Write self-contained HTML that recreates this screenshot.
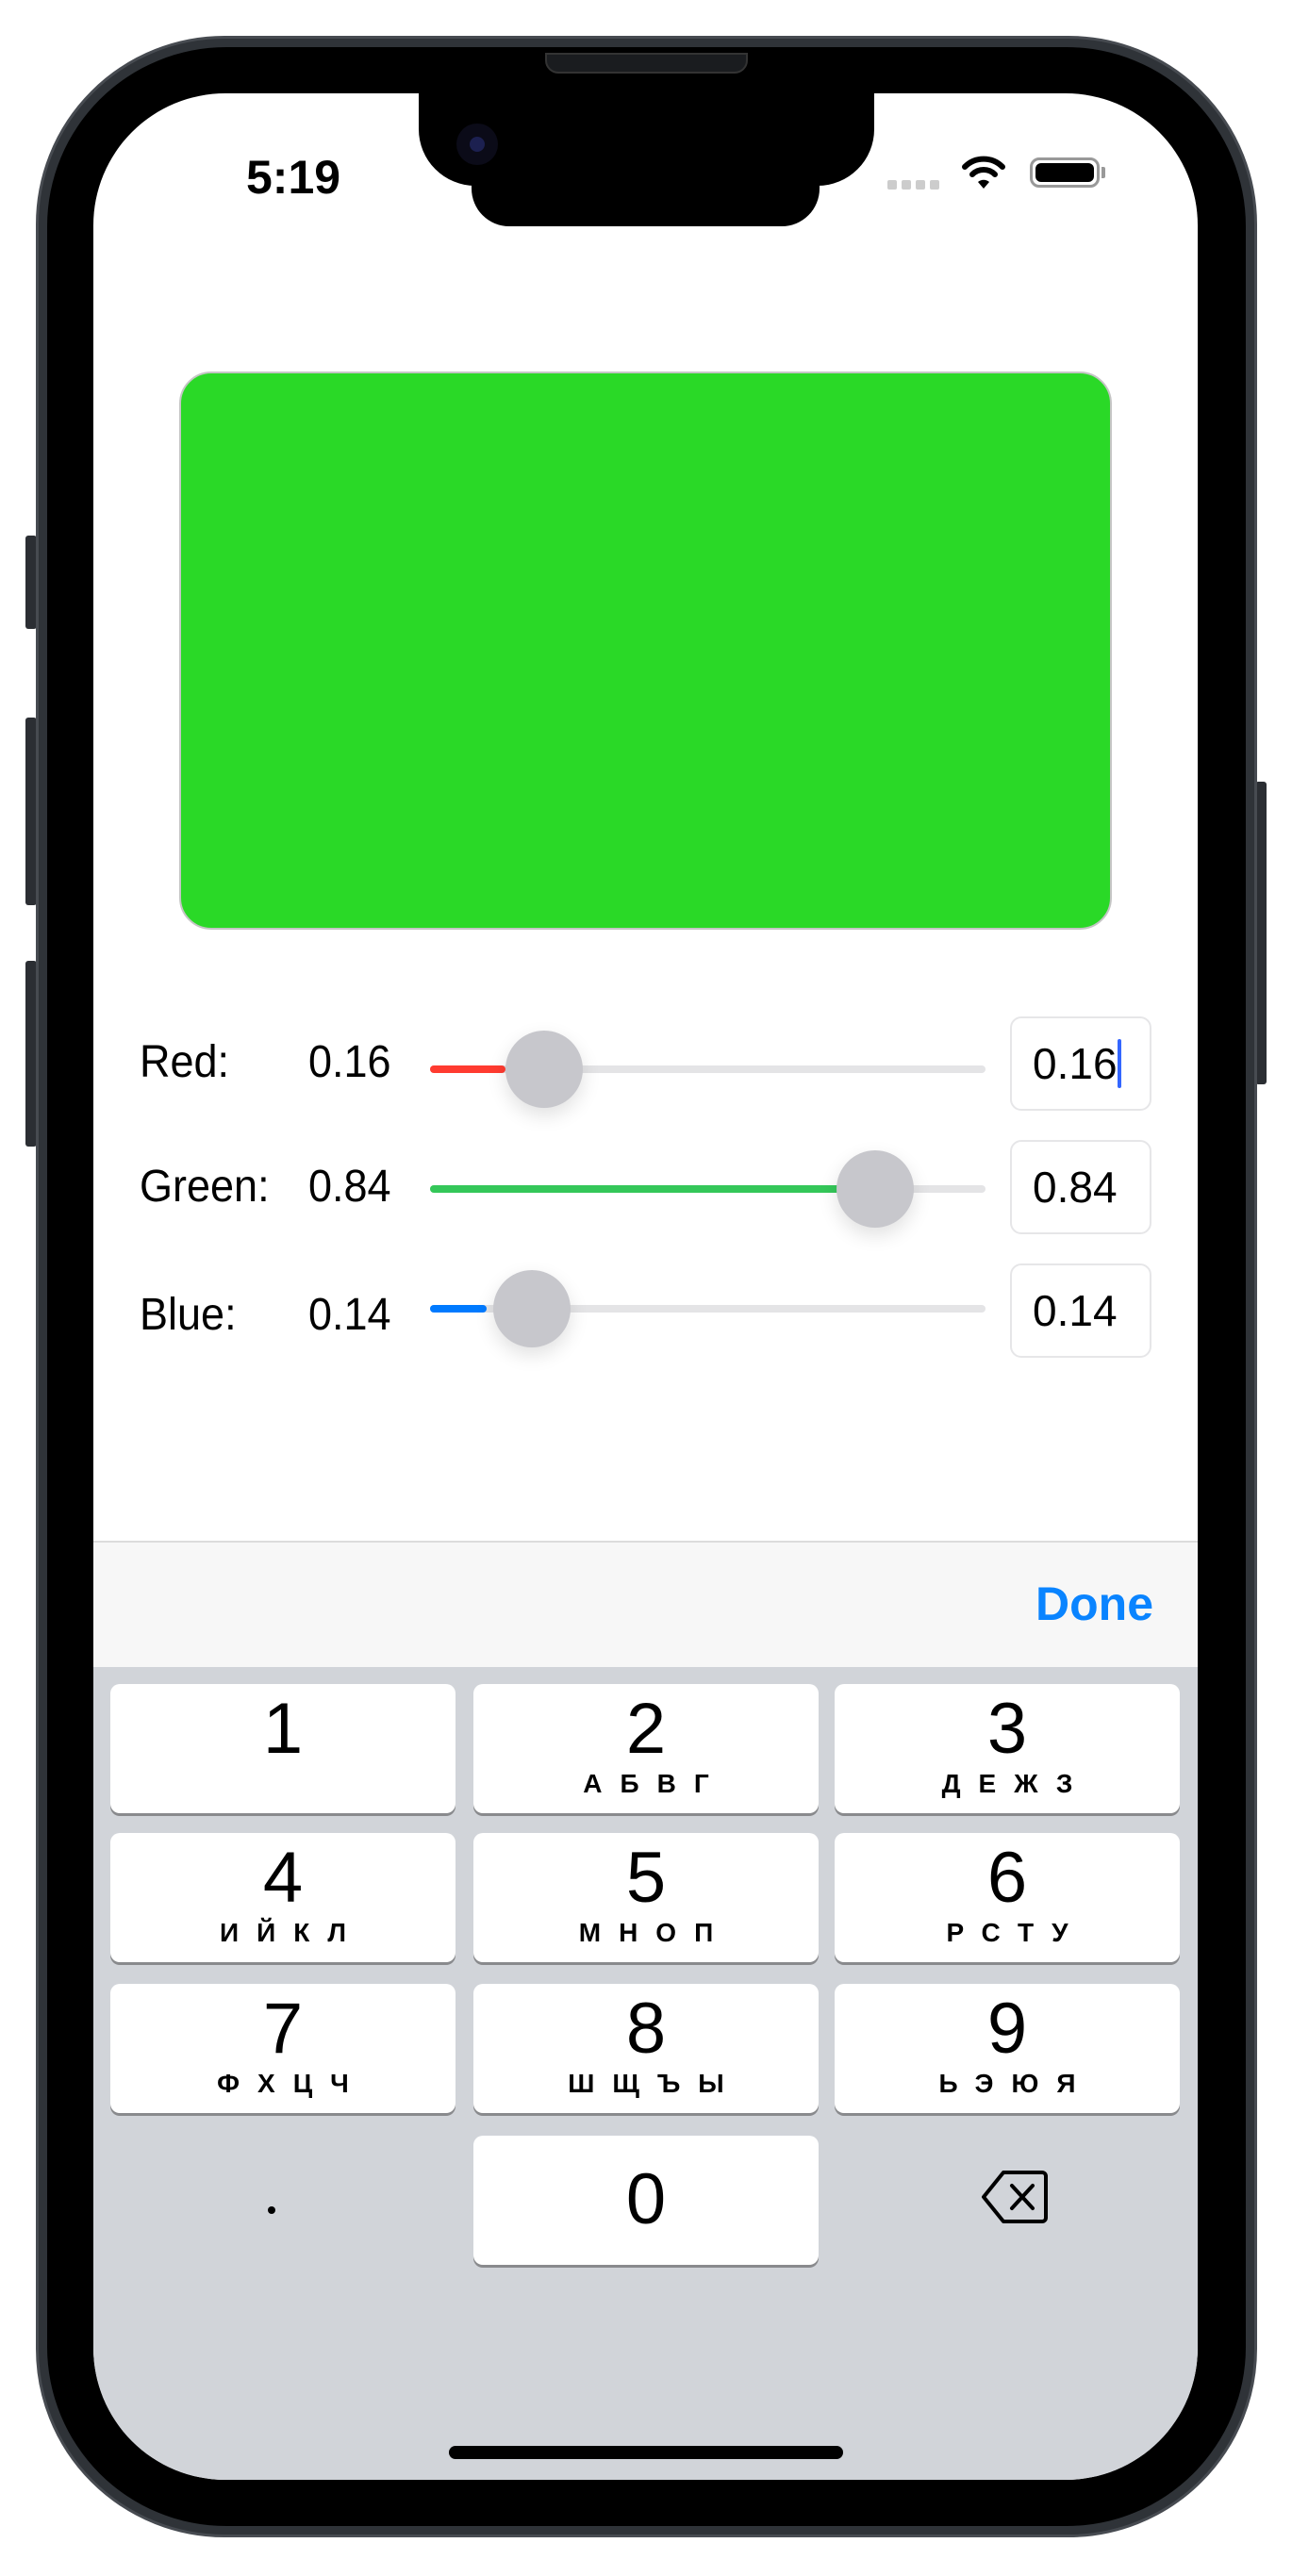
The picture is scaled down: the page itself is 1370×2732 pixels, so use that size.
<!DOCTYPE html>
<html><head><meta charset="utf-8"><style>
*{margin:0;padding:0;box-sizing:border-box}
body{width:1370px;height:2732px;background:#fff;position:relative;overflow:hidden;font-family:"Liberation Sans","Noto Sans CJK SC",sans-serif}
.a{position:absolute}
.btn{position:absolute;background:#2b2e33;border-radius:3px}
.frame{left:38px;top:38px;width:1295px;height:2653px;border-radius:200px;background:#2f3338;border:3px solid #474b51}
.bezel{left:50px;top:50px;width:1271px;height:2629px;border-radius:190px;background:#000}
.screen{left:99px;top:99px;width:1171px;height:2531px;border-radius:140px;background:#fff;overflow:hidden}
.lbl{position:absolute;font-size:45px;color:#000;line-height:1;transform:scaleY(1.08);transform-origin:left top}
.track{position:absolute;left:357px;width:589px;height:8px;border-radius:4px;background:#e4e4e6}
.fill{position:absolute;left:0;top:0;height:8px;border-radius:4px}
.thumb{position:absolute;width:82px;height:82px;border-radius:50%;background:#c7c7cc;box-shadow:0 8px 20px rgba(0,0,0,.12)}
.tf{position:absolute;left:972px;width:150px;height:100px;border:2px solid #e6e6e8;border-radius:12px;font-size:46px;line-height:96px;padding-left:22px}
.key{position:absolute;width:366px;height:137px;background:#fff;border-radius:10px;box-shadow:0 3px 0 #898a8d;text-align:center}
.d{font-size:76px;line-height:1;padding-top:10px;color:#000}
.l{font-size:28px;font-weight:bold;letter-spacing:19px;margin-left:19px;line-height:1;margin-top:6px}
</style></head><body>
<div class="btn" style="left:27px;top:568px;width:12px;height:99px"></div>
<div class="btn" style="left:27px;top:761px;width:12px;height:199px"></div>
<div class="btn" style="left:27px;top:1019px;width:12px;height:197px"></div>
<div class="btn" style="left:1331px;top:829px;width:12px;height:321px"></div>
<div class="a frame"></div>
<div class="a bezel"></div>
<div class="a screen">
 <div class="a" style="left:162px;top:60px;font-size:50px;font-weight:bold">5:19</div>
 <div class="a" style="left:842px;top:92px;width:56px;height:10px;display:flex;gap:5px">
  <i style="width:10px;height:10px;background:#ccc;border-radius:2px"></i><i style="width:10px;height:10px;background:#ccc;border-radius:2px"></i><i style="width:10px;height:10px;background:#ccc;border-radius:2px"></i><i style="width:10px;height:10px;background:#ccc;border-radius:2px"></i></div>
 <svg class="a" style="left:920px;top:66px" width="48" height="36" viewBox="0 0 48 36"><path d="M4 12a28 28 0 0 1 40 0" stroke="#000" stroke-width="6" fill="none" stroke-linecap="round"/><path d="M12 20a17 17 0 0 1 24 0" stroke="#000" stroke-width="6" fill="none" stroke-linecap="round"/><path d="M18 28l6 7 6-7a9 9 0 0 0-12 0z" fill="#000"/></svg>
 <div class="a" style="left:993px;top:68px;width:74px;height:32px;border:3px solid #999;border-radius:10px;padding:3px"><div style="width:100%;height:100%;background:#000;border-radius:6px"></div></div>
 <div class="a" style="left:1069px;top:78px;width:4px;height:12px;background:#999;border-radius:0 2px 2px 0"></div>
 <div class="a" style="left:345px;top:-10px;width:483px;height:108px;background:#000;border-radius:0 0 60px 60px"></div>
 <div class="a" style="left:401px;top:60px;width:369px;height:81px;background:#000;border-radius:0 0 40px 40px"></div>
 <div class="a" style="left:385px;top:32px;width:44px;height:44px;border-radius:50%;background:#0b0b18"></div>
 <div class="a" style="left:399px;top:46px;width:16px;height:16px;border-radius:50%;background:#1c2050"></div>
 <div class="a" style="left:91px;top:295px;width:989px;height:592px;background:#2ad927;border:2px solid #c5c5c5;border-radius:34px"></div>

 <div class="lbl" style="left:49px;top:1002px">Red:</div>
 <div class="lbl" style="left:228px;top:1002px">0.16</div>
 <div class="track" style="top:1031px"><div class="fill" style="width:80px;background:#ff3b30"></div></div>
 <div class="thumb" style="left:437px;top:994px"></div>
 <div class="tf" style="top:979px">0.16<span style="position:absolute;left:112px;top:22px;width:4px;height:52px;background:#3366ff;border-radius:2px"></span></div>

 <div class="lbl" style="left:49px;top:1134px">Green:</div>
 <div class="lbl" style="left:228px;top:1134px">0.84</div>
 <div class="track" style="top:1158px"><div class="fill" style="width:470px;background:#34c759"></div></div>
 <div class="thumb" style="left:788px;top:1121px"></div>
 <div class="tf" style="top:1110px">0.84</div>

 <div class="lbl" style="left:49px;top:1270px">Blue:</div>
 <div class="lbl" style="left:228px;top:1270px">0.14</div>
 <div class="track" style="top:1285px"><div class="fill" style="width:60px;background:#007aff"></div></div>
 <div class="thumb" style="left:424px;top:1248px"></div>
 <div class="tf" style="top:1241px">0.14</div>

 <div class="a" style="left:0;top:1535px;width:1171px;height:134px;background:#f7f7f7;border-top:2px solid #dcdcdc"></div>
 <div class="a" style="left:999px;top:1573px;font-size:50px;font-weight:bold;color:#0a84ff">Done</div>
 <div class="a" style="left:0;top:1669px;width:1171px;height:900px;background:#d1d4d9"></div>
 <div class="key" style="left:18px;top:1687px"><div class="d">1</div></div>
 <div class="key" style="left:403px;top:1687px"><div class="d">2</div><div class="l">АБВГ</div></div>
 <div class="key" style="left:786px;top:1687px"><div class="d">3</div><div class="l">ДЕЖЗ</div></div>
 <div class="key" style="left:18px;top:1845px"><div class="d">4</div><div class="l">ИЙКЛ</div></div>
 <div class="key" style="left:403px;top:1845px"><div class="d">5</div><div class="l">МНОП</div></div>
 <div class="key" style="left:786px;top:1845px"><div class="d">6</div><div class="l">РСТУ</div></div>
 <div class="key" style="left:18px;top:2005px"><div class="d">7</div><div class="l">ФХЦЧ</div></div>
 <div class="key" style="left:403px;top:2005px"><div class="d">8</div><div class="l">ШЩЪЫ</div></div>
 <div class="key" style="left:786px;top:2005px"><div class="d">9</div><div class="l">ЬЭЮЯ</div></div>
 <div class="key" style="left:403px;top:2166px"><div class="d" style="padding-top:30px">0</div></div>
 <div class="a" style="left:185px;top:2241px;width:8px;height:8px;border-radius:50%;background:#000"></div>
 <svg class="a" style="left:941px;top:2202px" width="72" height="58" viewBox="0 0 72 58"><path d="M24 3H65a4 4 0 0 1 4 4V51a4 4 0 0 1-4 4H24L3 29z" fill="none" stroke="#000" stroke-width="4" stroke-linejoin="round"/><path d="M33 17l22 24M55 17L33 41" stroke="#000" stroke-width="4" stroke-linecap="round"/></svg>
 <div class="a" style="left:377px;top:2495px;width:418px;height:14px;border-radius:7px;background:#000"></div>
</div>
<div class="a" style="left:578px;top:56px;width:215px;height:22px;border-radius:0 0 14px 14px;background:#1a1c1f;border:2px solid #333"></div>
</body></html>
